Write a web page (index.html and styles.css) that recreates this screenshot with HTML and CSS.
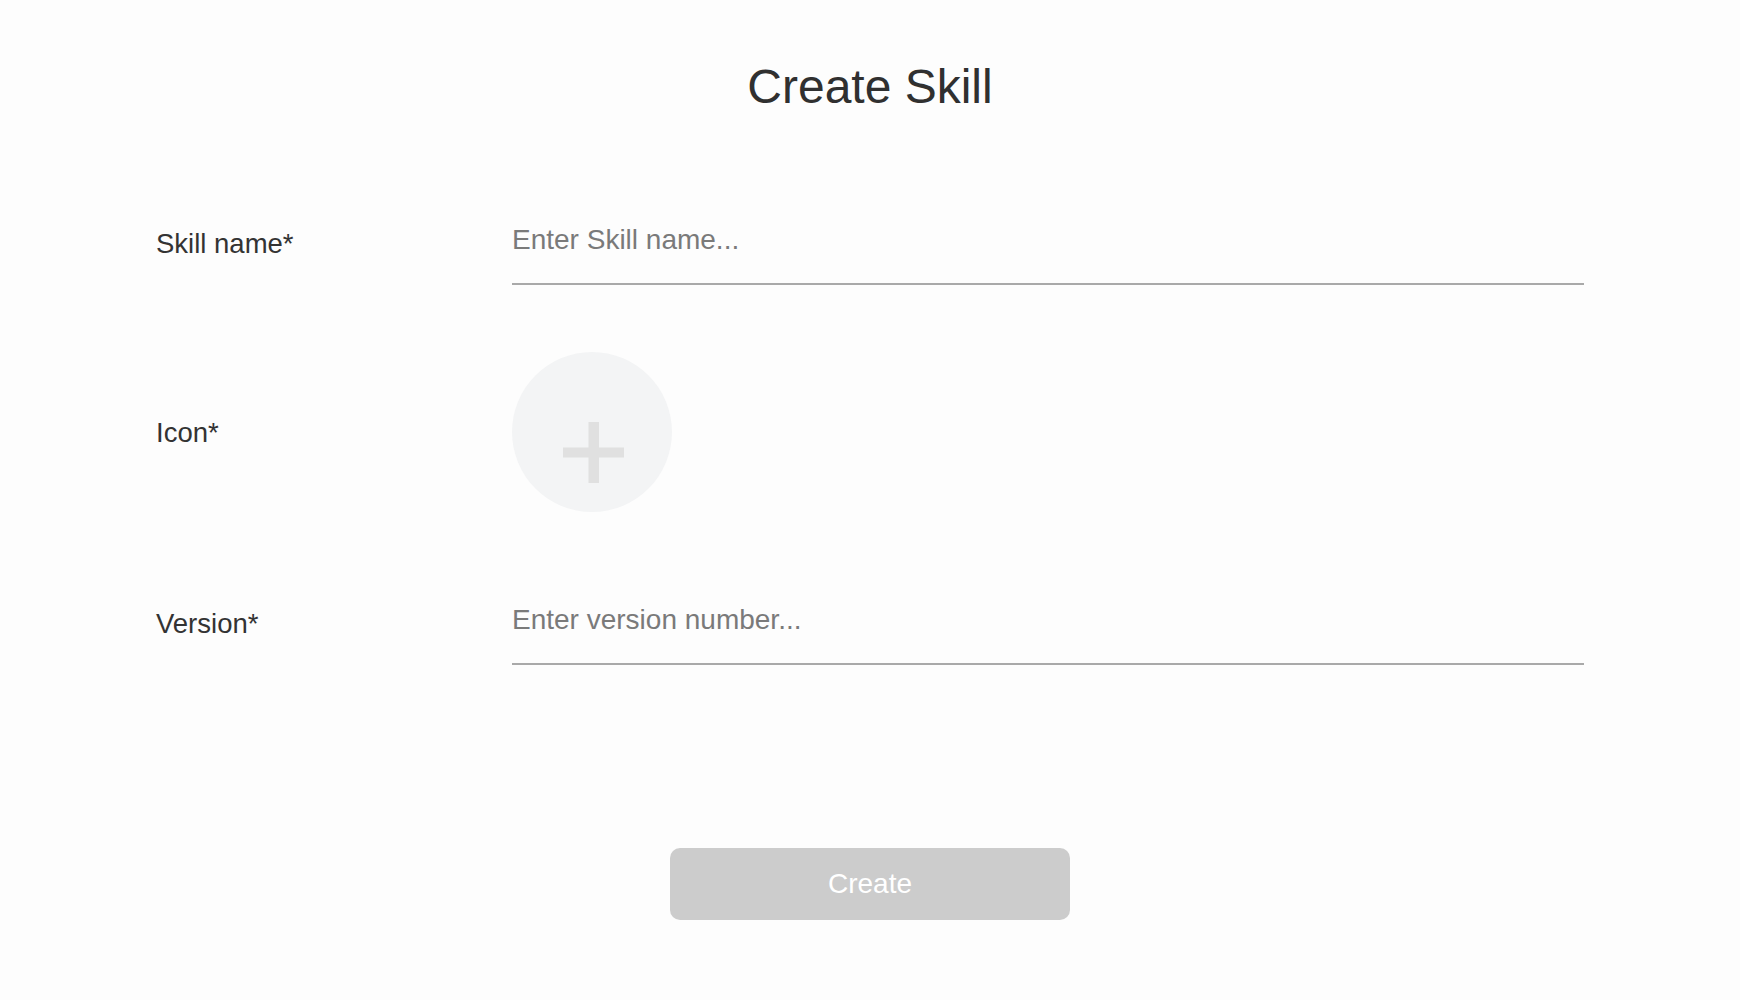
FILE: index.html
```html
<!DOCTYPE html>
<html lang="en">
<head>
<meta charset="utf-8">
<title>Create Skill</title>
<link rel="stylesheet" href="styles.css">
</head>
<body>
<main class="page">
  <h1 class="title">Create Skill</h1>
  <form class="form">
    <div class="row row-text row-first">
      <label class="label" for="skill-name">Skill name*</label>
      <input class="field" id="skill-name" type="text" placeholder="Enter Skill name...">
    </div>
    <div class="row row-icon">
      <span class="label">Icon*</span>
      <div class="icon-picker">
        <svg class="plus" width="61" height="61" viewBox="0 0 61 61" aria-hidden="true">
          <rect x="0" y="25.5" width="61" height="10" fill="#e0e0e0"/>
          <rect x="25.5" y="0" width="10.5" height="61" fill="#e0e0e0"/>
        </svg>
      </div>
    </div>
    <div class="row row-text row-last">
      <label class="label" for="version">Version*</label>
      <input class="field" id="version" type="text" placeholder="Enter version number...">
    </div>
    <div class="actions">
      <button class="create" type="button">Create</button>
    </div>
  </form>
</main>
</body>
</html>
```

FILE: styles.css
```css
html, body {
  margin: 0;
  padding: 0;
  background: #fdfdfd;
}

body {
  font-family: "Liberation Sans", Arial, sans-serif;
  color: #333333;
}

.page {
  padding: 59px 156px 0;
}

.title {
  margin: 0;
  font-size: 48px;
  line-height: 56px;
  font-weight: 400;
  text-align: center;
  color: #303030;
}

.form {
  display: flex;
  flex-direction: column;
}

.row {
  display: grid;
  grid-template-columns: 356px 1fr;
}

.row-text {
  align-items: start;
}

.row-first {
  margin-top: 95px;
}

.row-icon {
  margin-top: 67px;
  align-items: center;
}

.row-last {
  margin-top: 78px;
}

.label {
  font-size: 27.5px;
  line-height: 32px;
  color: #333333;
}

.row-text .label {
  margin-top: 18px;
}

.row-icon .label {
  margin-top: 2px;
}

.field {
  box-sizing: border-box;
  display: block;
  width: 100%;
  height: 75px;
  margin: 0;
  padding: 0 0 13px 0;
  border: none;
  border-bottom: 2px solid #a9a9a9;
  background: transparent;
  outline: none;
  font-family: "Liberation Sans", Arial, sans-serif;
  font-size: 28px;
  color: #333333;
}

.field::placeholder {
  color: #7a7a7a;
  opacity: 1;
}

.icon-picker {
  box-sizing: border-box;
  width: 160px;
  height: 160px;
  border-radius: 50%;
  background: #f3f4f5;
  display: flex;
  align-items: center;
  justify-content: center;
  padding: 40px 0 0 3px;
}

.plus {
  display: block;
}

.actions {
  display: flex;
  justify-content: center;
  margin-top: 183px;
}

.create {
  width: 400px;
  height: 72px;
  border: none;
  border-radius: 10px;
  background: #cccccc;
  color: #ffffff;
  font-family: "Liberation Sans", Arial, sans-serif;
  font-size: 28px;
  line-height: 32px;
  padding: 0;
  cursor: default;
}
```
